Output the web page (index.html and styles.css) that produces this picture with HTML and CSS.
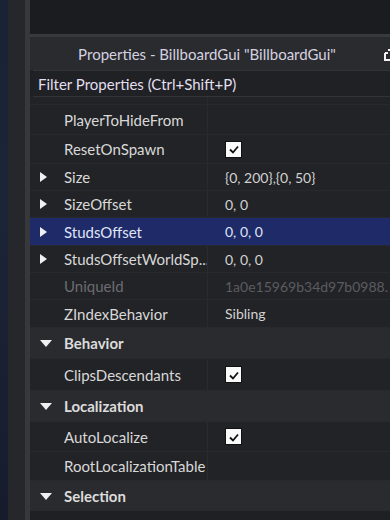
FILE: index.html
```html
<!DOCTYPE html>
<html>
<head>
<meta charset="utf-8">
<link rel="stylesheet" href="styles.css">
</head>
<body>
<div class="screen">
  <div class="edge-blue"></div>
  <div class="edge-gray"></div>
  <div class="edge-line"></div>
  <div class="main">
    <div class="top-pane"></div>
    <div class="title-bar">
      <span class="title">Properties - BillboardGui "BillboardGui"</span>
      <svg class="popout" width="10" height="14" viewBox="0 0 10 14"><path d="M2 5h3M2 5v7h8M5 2h5v5" fill="none" stroke="#f2f2f2" stroke-width="2"/></svg>
    </div>
    <div class="filter">Filter Properties (Ctrl+Shift+P)</div>
    <div class="rows">
      <div class="row h8"><span class="name"></span><span class="value"></span></div>
      <div class="row h30"><span class="name">PlayerToHideFrom</span><span class="value"></span></div>
      <div class="row h29"><span class="name">ResetOnSpawn</span><span class="value"><span class="check"><svg width="12" height="10" viewBox="0 0 12 10"><path d="M2 5.5l3 3 5-6" fill="none" stroke="#111" stroke-width="1.8"/></svg></span></span></div>
      <div class="row h27"><span class="arrow right"></span><span class="name">Size</span><span class="value">{0, 200},{0, 50}</span></div>
      <div class="row h27"><span class="arrow right"></span><span class="name">SizeOffset</span><span class="value">0, 0</span></div>
      <div class="row h28 selected"><span class="arrow right"></span><span class="name">StudsOffset</span><span class="value">0, 0, 0</span></div>
      <div class="row h27"><span class="arrow right"></span><span class="name">StudsOffsetWorldSp...</span><span class="value">0, 0, 0</span></div>
      <div class="row h27 disabled"><span class="name">UniqueId</span><span class="value">1a0e15969b34d97b0988.</span></div>
      <div class="row h28"><span class="name">ZIndexBehavior</span><span class="value">Sibling</span></div>
      <div class="row h31 category"><span class="arrow down"></span><span class="name">Behavior</span></div>
      <div class="row h32"><span class="name">ClipsDescendants</span><span class="value"><span class="check"><svg width="12" height="10" viewBox="0 0 12 10"><path d="M2 5.5l3 3 5-6" fill="none" stroke="#111" stroke-width="1.8"/></svg></span></span></div>
      <div class="row h31 category"><span class="arrow down"></span><span class="name">Localization</span></div>
      <div class="row h30"><span class="name">AutoLocalize</span><span class="value"><span class="check"><svg width="12" height="10" viewBox="0 0 12 10"><path d="M2 5.5l3 3 5-6" fill="none" stroke="#111" stroke-width="1.8"/></svg></span></span></div>
      <div class="row h29"><span class="name">RootLocalizationTable</span><span class="value"></span></div>
      <div class="row h30 category"><span class="arrow down"></span><span class="name">Selection</span></div>
    </div>
  </div>
</div>
</body>
</html>
```
FILE: styles.css
```css
* { box-sizing: border-box; }
html, body { margin: 0; padding: 0; }
body {
  width: 390px;
  height: 520px;
  overflow: hidden;
  background: #1f2023;
  font-family: "Lato", "Open Sans", sans-serif;
  font-size: 15px;
  color: #d8d8d8;
}
.screen {
  display: flex;
  height: 520px;
}
.edge-blue {
  width: 8px;
  flex-shrink: 0;
  background: linear-gradient(180deg, #1a2236 0%, #1c2438 40%, #161c2c 100%);
}
.edge-gray {
  width: 17px;
  flex-shrink: 0;
  background: #26272a;
}
.edge-line {
  width: 5px;
  flex-shrink: 0;
  background: #37383b;
}
.main {
  flex: 1;
  display: flex;
  flex-direction: column;
  min-width: 0;
  overflow: hidden;
}
.top-pane {
  flex-shrink: 0;
  height: 37px;
  background: #1b1c1f;
  border-bottom: 3px solid #38393c;
}
.title-bar {
  flex-shrink: 0;
  height: 33px;
  background: #2a2b2e;
  display: flex;
  align-items: center;
  justify-content: center;
  position: relative;
  padding-right: 6px;
}
.title {
  color: #d4d2e0;
  font-size: 15px;
}
.popout {
  position: absolute;
  right: -3px;
  top: 11px;
}
.filter {
  flex-shrink: 0;
  height: 27px;
  margin-left: 3px;
  background: #202124;
  border-top: 1px solid #333437;
  border-bottom: 1px solid #333437;
  display: flex;
  align-items: center;
  padding-left: 5px;
  color: #e2dfee;
  font-size: 15px;
}
.rows {
  flex-shrink: 0;
  display: flex;
  flex-direction: column;
  background: #222326;
}
.row {
  display: flex;
  align-items: center;
  position: relative;
  border-bottom: 1px solid #28292c;
  flex-shrink: 0;
}
.h8 { height: 8px; }
.h27 { height: 27px; }
.h28 { height: 28px; }
.h29 { height: 29px; }
.h30 { height: 30px; }
.h31 { height: 31px; }
.h32 { height: 32px; }
.row .name {
  width: 178px;
  flex-shrink: 0;
  padding-left: 34px;
  white-space: nowrap;
  overflow: hidden;
  align-self: stretch;
  display: flex;
  align-items: center;
  border-right: 1px solid #2a2b2e;
}
.row .value {
  padding-left: 17px;
  white-space: nowrap;
  color: #d2d2d2;
  font-size: 14px;
}
.row .arrow {
  position: absolute;
  left: 10px;
  top: 50%;
}
.arrow.right {
  width: 0; height: 0;
  margin-top: -5px;
  border-top: 5px solid transparent;
  border-bottom: 5px solid transparent;
  border-left: 7px solid #f0f0f0;
}
.arrow.down {
  width: 0; height: 0;
  margin-top: -3px;
  border-left: 6px solid transparent;
  border-right: 6px solid transparent;
  border-top: 7px solid #f0f0f0;
}
.selected { background: #1f2a68; }
.selected .name, .selected .value { color: #dfe4f6; border-right-color: transparent; }
.disabled .name { color: #6b6c70; }
.disabled .value { color: #5b5c60; }
.category {
  background: #2a2b2e;
}
.category .name {
  font-weight: bold;
  color: #dcdcdc;
  border-right: none;
  width: auto;
}
.check {
  display: flex;
  width: 17px;
  height: 17px;
  background: #fafafa;
  border: 1px solid #111;
  align-items: center;
  justify-content: center;
}
```
